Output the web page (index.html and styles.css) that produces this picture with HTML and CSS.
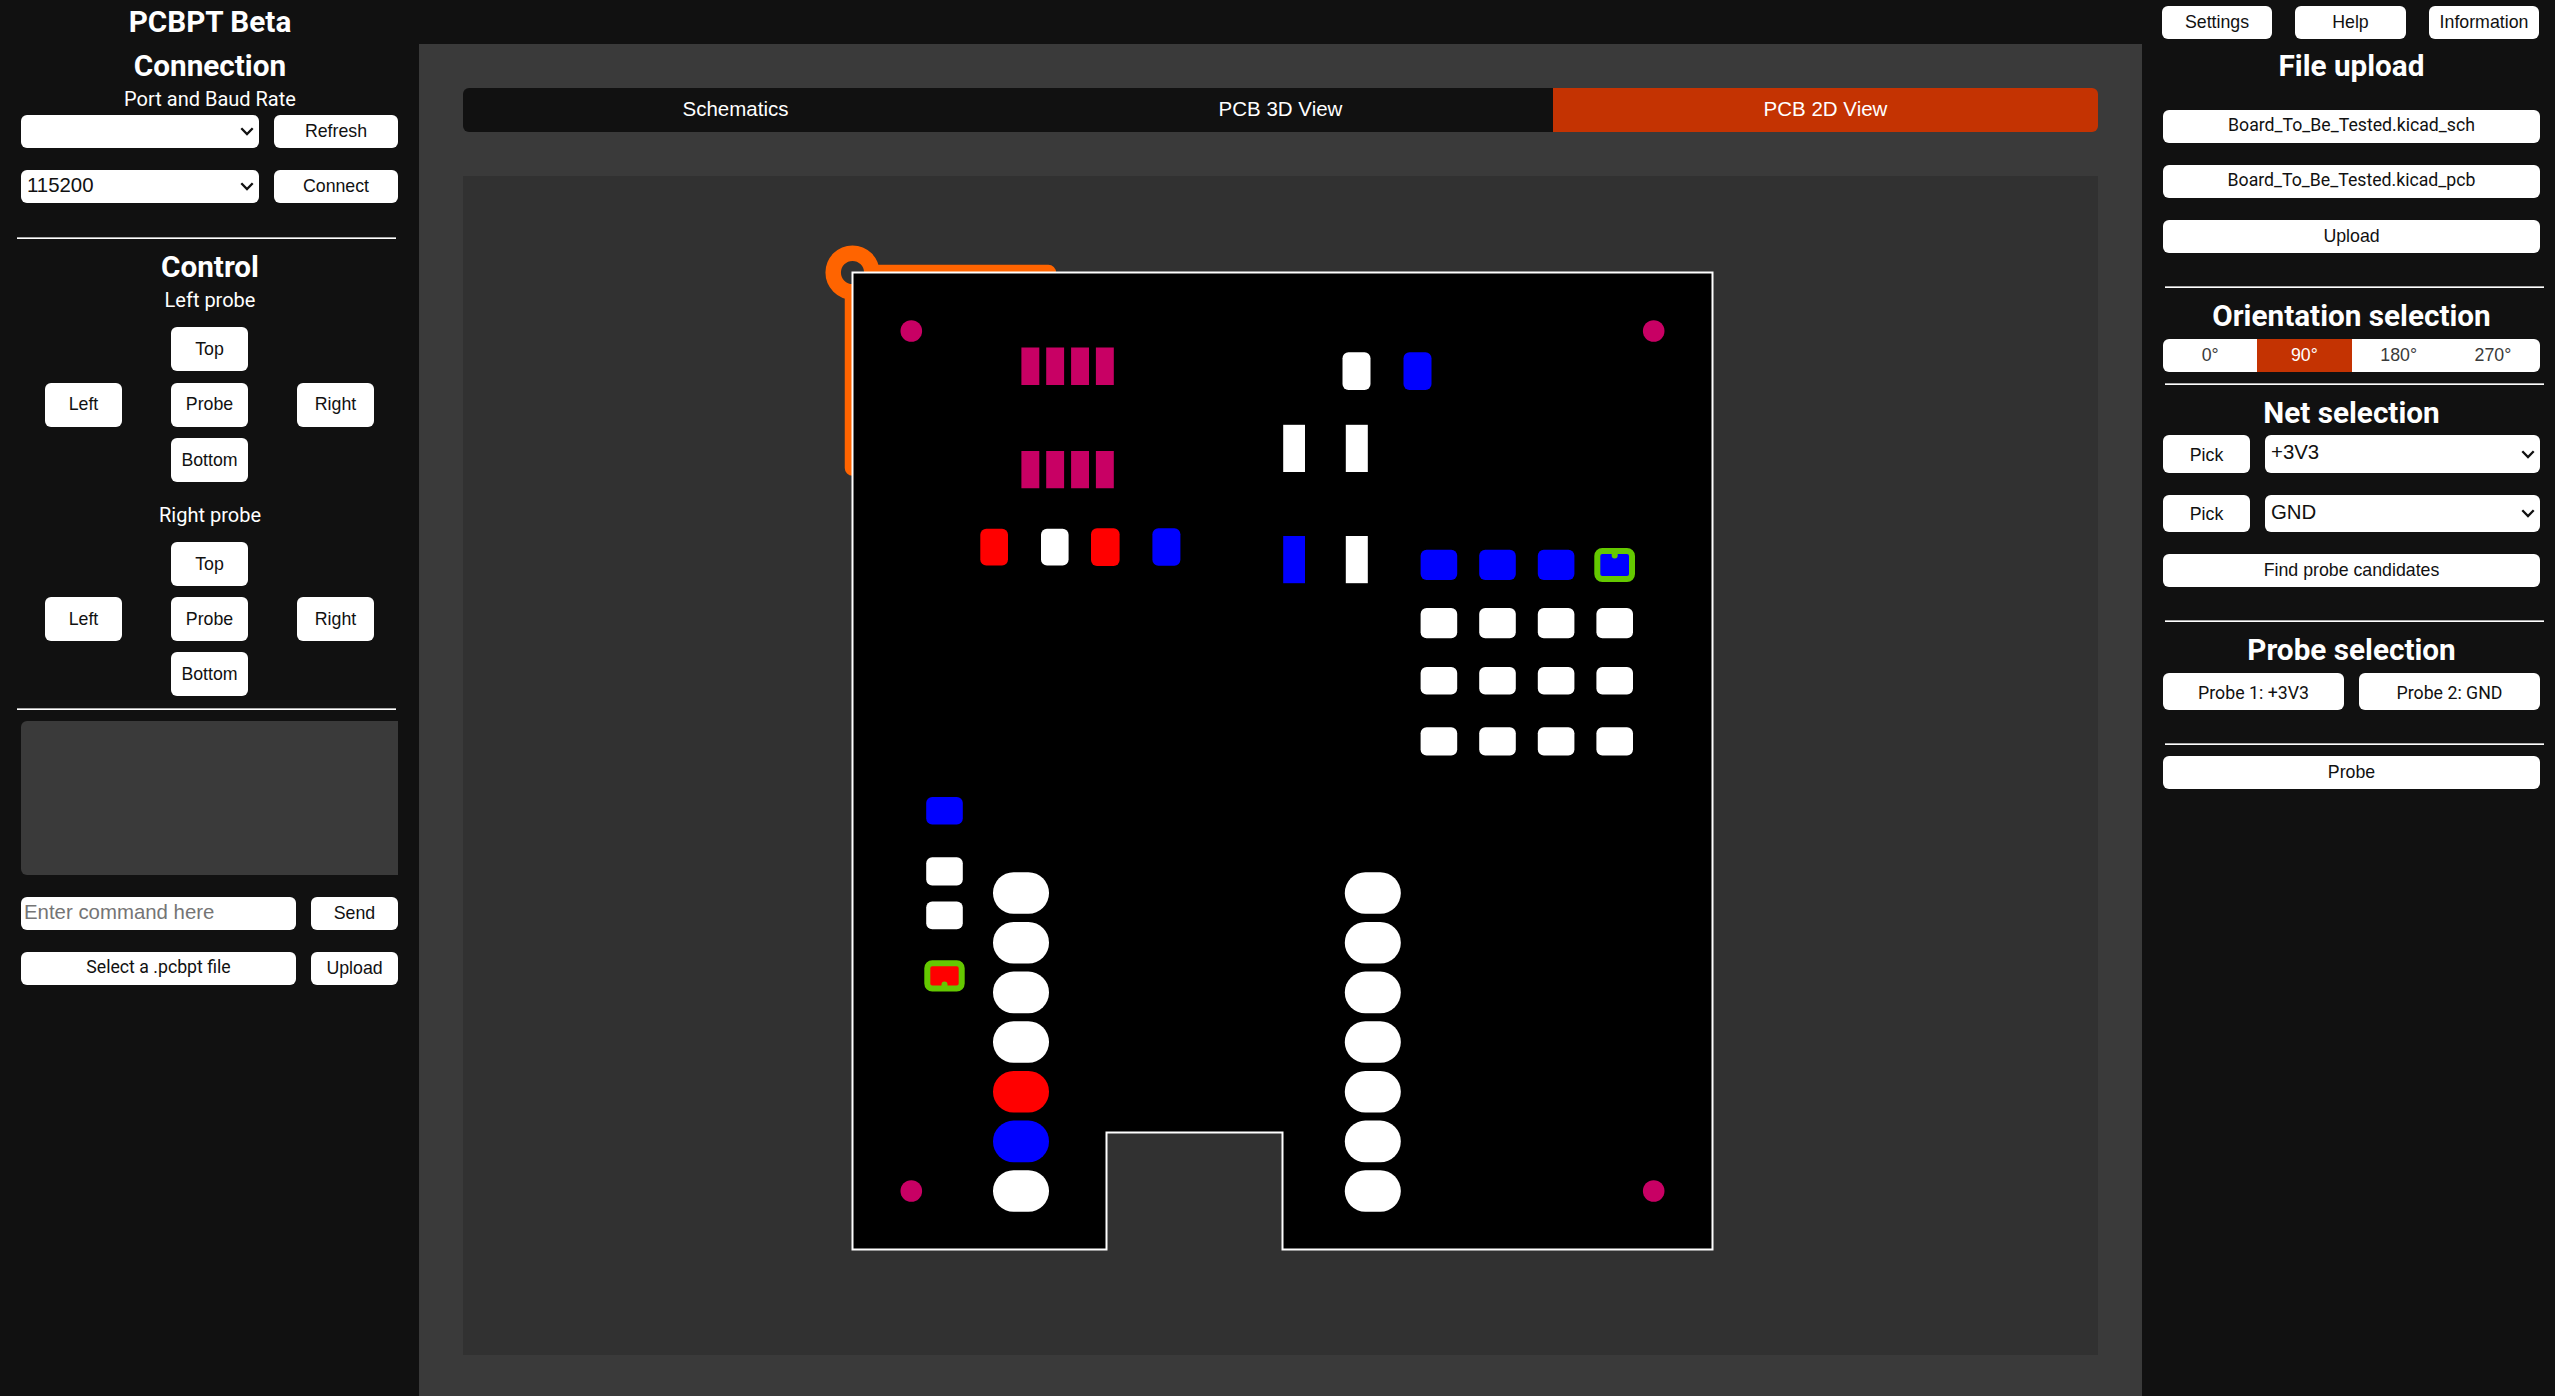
FILE: index.html
```html
<!DOCTYPE html>
<html lang="en">
<head>
<meta charset="utf-8">
<title>PCBPT Beta</title>
<link rel="stylesheet" href="styles.css">
</head>
<body>
<div class="app">
  <aside class="side side-left">
    <h1 class="heading">PCBPT Beta</h1>
    <h2 class="heading">Connection</h2>
    <p class="caption">Port and Baud Rate</p>
    <div class="stack stack-connection">
      <div class="row row-port">
        <div class="select"><span class="select-value"></span><svg class="chevron" viewBox="0 0 14 9"><path d="M1.3 1.3 7 7 12.7 1.3"/></svg></div>
        <button class="btn">Refresh</button>
      </div>
      <div class="row row-port">
        <div class="select"><span class="select-value">115200</span><svg class="chevron" viewBox="0 0 14 9"><path d="M1.3 1.3 7 7 12.7 1.3"/></svg></div>
        <button class="btn">Connect</button>
      </div>
    </div>
    <hr class="rule rule-connection">
    <h2 class="heading">Control</h2>
    <p class="caption">Left probe</p>
    <div class="pad-grid">
      <button class="btn pad-top">Top</button>
      <button class="btn pad-left">Left</button>
      <button class="btn">Probe</button>
      <button class="btn">Right</button>
      <button class="btn pad-bottom">Bottom</button>
    </div>
    <p class="caption caption-right">Right probe</p>
    <div class="pad-grid pad-grid-right">
      <button class="btn pad-top">Top</button>
      <button class="btn pad-left">Left</button>
      <button class="btn">Probe</button>
      <button class="btn">Right</button>
      <button class="btn pad-bottom">Bottom</button>
    </div>
    <hr class="rule rule-control">
    <div class="stack">
      <div class="console"></div>
      <div class="row row-command">
        <input class="command" type="text" placeholder="Enter command here">
        <button class="btn">Send</button>
      </div>
      <div class="row row-command">
        <label class="btn file-label">Select a .pcbpt file</label>
        <button class="btn">Upload</button>
      </div>
    </div>
  </aside>

  <main class="main">
    <nav class="tabs">
      <button class="tab">Schematics</button>
      <button class="tab">PCB 3D View</button>
      <button class="tab tab-active">PCB 2D View</button>
    </nav>
    <section class="viewer">
      <svg class="board" viewBox="463 176 1635 1179">
        <g class="origin">
          <circle cx="852.5" cy="272.5" r="19.3"/>
          <path d="M873 272.5H1048.3M852.5 293V468"/>
        </g>
        <path class="outline" d="M852.5 272.5H1712.5V1249.5H1282.5V1132.5H1106.5V1249.5H852.5Z"/>
        <g class="unused">
          <circle cx="911.3" cy="331" r="10.8"/>
          <circle cx="1653.7" cy="331" r="10.8"/>
          <circle cx="911.3" cy="1191" r="10.8"/>
          <circle cx="1653.7" cy="1191" r="10.8"/>
          <path d="M1021.4 347.5h17.9v37.5h-17.9zM1046.2 347.5h17.9v37.5h-17.9zM1071.1 347.5h17.9v37.5h-17.9zM1095.9 347.5h17.9v37.5h-17.9z"/>
          <path d="M1021.4 451h17.9v37.3h-17.9zM1046.2 451h17.9v37.3h-17.9zM1071.1 451h17.9v37.3h-17.9zM1095.9 451h17.9v37.3h-17.9z"/>
        </g>
        <g class="pads">
          <rect x="1041" y="528.8" width="27.6" height="36.6" rx="6"/>
          <rect x="1342.5" y="352.2" width="28" height="37.8" rx="6"/>
          <rect x="1283.2" y="424.8" width="21.8" height="47.2"/>
          <rect x="1345.8" y="424.8" width="22" height="47.2"/>
          <rect x="1345.8" y="536" width="22" height="47.2"/>
          <rect x="1420.6" y="608" width="36.6" height="30.2" rx="6"/>
          <rect x="1479.2" y="608" width="36.6" height="30.2" rx="6"/>
          <rect x="1537.8" y="608" width="36.6" height="30.2" rx="6"/>
          <rect x="1596.4" y="608" width="36.6" height="30.2" rx="6"/>
          <rect x="1420.6" y="667" width="36.6" height="27.6" rx="6"/>
          <rect x="1479.2" y="667" width="36.6" height="27.6" rx="6"/>
          <rect x="1537.8" y="667" width="36.6" height="27.6" rx="6"/>
          <rect x="1596.4" y="667" width="36.6" height="27.6" rx="6"/>
          <rect x="1420.6" y="727.2" width="36.6" height="28.2" rx="6"/>
          <rect x="1479.2" y="727.2" width="36.6" height="28.2" rx="6"/>
          <rect x="1537.8" y="727.2" width="36.6" height="28.2" rx="6"/>
          <rect x="1596.4" y="727.2" width="36.6" height="28.2" rx="6"/>
          <rect x="926.2" y="857.2" width="36.6" height="28.4" rx="6"/>
          <rect x="926.2" y="901.4" width="36.6" height="27.8" rx="6"/>
          <rect x="993" y="872.2" width="56" height="41.6" rx="20.6"/>
          <rect x="993" y="921.9" width="56" height="41.6" rx="20.6"/>
          <rect x="993" y="971.6" width="56" height="41.6" rx="20.6"/>
          <rect x="993" y="1021.2" width="56" height="41.6" rx="20.6"/>
          <rect x="993" y="1170.2" width="56" height="41.6" rx="20.6"/>
          <rect x="1344.8" y="872.2" width="56" height="41.6" rx="20.6"/>
          <rect x="1344.8" y="921.9" width="56" height="41.6" rx="20.6"/>
          <rect x="1344.8" y="971.6" width="56" height="41.6" rx="20.6"/>
          <rect x="1344.8" y="1021.2" width="56" height="41.6" rx="20.6"/>
          <rect x="1344.8" y="1070.9" width="56" height="41.6" rx="20.6"/>
          <rect x="1344.8" y="1120.6" width="56" height="41.6" rx="20.6"/>
          <rect x="1344.8" y="1170.2" width="56" height="41.6" rx="20.6"/>
        </g>
        <g class="net-one">
          <rect x="980.3" y="528.8" width="27.7" height="36.6" rx="6"/>
          <rect x="1091" y="528.2" width="28.6" height="37.8" rx="6"/>
          <rect x="926.2" y="962" width="36.6" height="28" rx="6"/>
          <rect x="993" y="1070.9" width="56" height="41.6" rx="20.6"/>
        </g>
        <g class="net-two">
          <rect x="1152.4" y="528.2" width="28" height="37.6" rx="6"/>
          <rect x="1403.5" y="352.2" width="28" height="37.8" rx="6"/>
          <rect x="1283.2" y="536" width="21.8" height="47.2"/>
          <rect x="1420.6" y="549.7" width="36.6" height="30.2" rx="6"/>
          <rect x="1479.2" y="549.7" width="36.6" height="30.2" rx="6"/>
          <rect x="1537.8" y="549.7" width="36.6" height="30.2" rx="6"/>
          <rect x="1596.4" y="549.7" width="36.6" height="30.2" rx="6"/>
          <rect x="926.2" y="796.9" width="36.6" height="27.6" rx="6"/>
          <rect x="993" y="1120.6" width="56" height="41.6" rx="20.6"/>
        </g>
        <g class="picked">
          <rect x="1597.3" y="550.9" width="34.7" height="28.2" rx="5"/>
          <path d="M1614.7 551v4.6"/>
          <rect x="927.3" y="963.2" width="34.4" height="25.4" rx="5"/>
          <path d="M944.5 988v-3.6"/>
        </g>
      </svg>
    </section>
  </main>

  <aside class="side side-right">
    <div class="toolbar">
      <button class="btn">Settings</button>
      <button class="btn">Help</button>
      <button class="btn">Information</button>
    </div>
    <h2 class="heading">File upload</h2>
    <div class="stack stack-files">
      <label class="btn file-label">Board_To_Be_Tested.kicad_sch</label>
      <label class="btn file-label">Board_To_Be_Tested.kicad_pcb</label>
      <button class="btn">Upload</button>
    </div>
    <hr class="rule rule-files">
    <h2 class="heading">Orientation selection</h2>
    <div class="segments">
      <button class="segment">0°</button>
      <button class="segment segment-active">90°</button>
      <button class="segment">180°</button>
      <button class="segment">270°</button>
    </div>
    <hr class="rule rule-orientation">
    <h2 class="heading">Net selection</h2>
    <div class="stack stack-nets">
      <div class="row row-net row-net-first">
        <button class="btn">Pick</button>
        <div class="select"><span class="select-value">+3V3</span><svg class="chevron" viewBox="0 0 14 9"><path d="M1.3 1.3 7 7 12.7 1.3"/></svg></div>
      </div>
      <div class="row row-net">
        <button class="btn">Pick</button>
        <div class="select"><span class="select-value">GND</span><svg class="chevron" viewBox="0 0 14 9"><path d="M1.3 1.3 7 7 12.7 1.3"/></svg></div>
      </div>
      <button class="btn">Find probe candidates</button>
    </div>
    <hr class="rule rule-nets">
    <h2 class="heading">Probe selection</h2>
    <div class="row row-probes">
      <label class="btn probe-label">Probe 1: +3V3</label>
      <label class="btn probe-label">Probe 2: GND</label>
    </div>
    <hr class="rule rule-probes">
    <button class="btn btn-probe">Probe</button>
  </aside>
</div>
</body>
</html>
```
FILE: styles.css
```css
* {
  box-sizing: border-box;
}

body {
  margin: 0;
  background: #111;
  color: #fff;
  font-family: Roboto, "Liberation Sans", sans-serif;
  overflow: hidden;
}

.app {
  display: grid;
  grid-template-columns: 419px 1723px 413px;
  height: 1396px;
}

.side {
  display: flex;
  flex-direction: column;
  background: #111;
}

.side-left {
  padding: 0 21px;
}

.side-right {
  padding: 0 15px 0 21px;
}

.heading {
  margin: 0;
  height: 44px;
  line-height: 44px;
  font-size: 29.7px;
  font-weight: 700;
  text-align: center;
}

.side-left .heading,
.side-left .caption {
  padding-left: 1px;
}

.caption {
  margin: 0;
  height: 22px;
  line-height: 22px;
  font-size: 20px;
  text-align: center;
}

.stack {
  display: flex;
  flex-direction: column;
  gap: 22px;
}

.stack-connection {
  margin-top: 5px;
}

.stack-files {
  margin-top: 22px;
}

.row {
  display: grid;
  gap: 15px;
  height: 33px;
}

.row-port {
  grid-template-columns: 238px 124px;
}

.row-command {
  grid-template-columns: 275px 87px;
}

.row-net {
  grid-template-columns: 87px 275px;
  height: 37px;
}

.row-net-first {
  height: 38px;
}

.row-probes {
  grid-template-columns: 1fr 1fr;
  height: 37px;
  margin-top: 1px;
}

.btn {
  display: flex;
  align-items: center;
  justify-content: center;
  height: 33px;
  margin: 0;
  padding: 0;
  border: 0;
  border-radius: 6px;
  background: #fff;
  color: #111;
  font: 17.75px "Liberation Sans", Arial, sans-serif;
  white-space: nowrap;
}

.row .btn {
  height: 100%;
}

.btn.file-label {
  padding-bottom: 3px;
  font-family: Roboto, sans-serif;
  font-size: 17.7px;
}

.btn.probe-label {
  padding-top: 2px;
  font-family: Roboto, sans-serif;
}

.row-net .btn {
  padding-top: 2px;
}

.select {
  display: flex;
  align-items: center;
  justify-content: space-between;
  padding: 0 5px 0 6px;
  border-radius: 6px;
  background: #fff;
  color: #111;
  font: 20.4px "Liberation Sans", Arial, sans-serif;
}

.select-value {
  padding-bottom: 2px;
}

.row-net .select-value {
  padding-bottom: 3px;
}

.chevron {
  width: 14px;
  height: 9px;
  fill: none;
  stroke: #111;
  stroke-width: 2.3;
}

.rule {
  width: 379px;
  height: 2px;
  border: 0;
  border-top: 1px solid #aaa;
  border-bottom: 1px solid #fff;
  flex: none;
}

.side-left .rule {
  margin-left: -4px;
}

.side-right .rule {
  margin-left: 2px;
}

.side .rule-connection {
  margin-top: 34px;
  margin-bottom: 6px;
}

.side .rule-control {
  margin-top: 12px;
  margin-bottom: 11px;
}

.side .rule-files {
  margin-top: 33px;
  margin-bottom: 6px;
}

.side .rule-orientation {
  margin-top: 11px;
  margin-bottom: 6px;
}

.side .rule-nets {
  margin-top: 33px;
  margin-bottom: 6px;
}

.side .rule-probes {
  margin-top: 33px;
  margin-bottom: 11px;
}

.pad-grid {
  display: grid;
  grid-template-columns: repeat(3, 77px);
  grid-auto-rows: 44px;
  column-gap: 49px;
  row-gap: 11.5px;
  margin: 16px 24px 0;
}

.pad-grid-right {
  row-gap: 11px;
}

.pad-grid .btn {
  height: 44px;
}

.pad-top,
.pad-bottom {
  grid-column: 2;
}

.pad-left {
  grid-column: 1;
}

.caption-right {
  margin-top: 22px;
}

.console {
  height: 154px;
  border-radius: 6px 0 0 6px;
  background: #3a3a3a;
}

.command {
  width: 100%;
  height: 33px;
  padding: 0 3px 3px;
  border: 0;
  border-radius: 6px;
  background: #fff;
  font: 20.4px "Liberation Sans", Arial, sans-serif;
}

.command::placeholder {
  color: #757575;
}

.main {
  display: flex;
  flex-direction: column;
  gap: 44px;
  margin-top: 44px;
  padding: 44px 44px 41px;
  background: #3a3a3a;
}

.tabs {
  display: grid;
  grid-template-columns: repeat(3, 1fr);
  height: 44px;
  border-radius: 6px;
  overflow: hidden;
  flex: none;
}

.tab {
  padding: 0 0 2px;
  border: 0;
  background: #111;
  color: #fff;
  font: 20.5px "Liberation Sans", Arial, sans-serif;
}

.tab-active {
  background: #c43302;
}

.viewer {
  height: 1179px;
  background: #313131;
}

.board {
  display: block;
  width: 1635px;
  height: 1179px;
}

.origin {
  fill: none;
  stroke: #ff6400;
  stroke-width: 15.5;
  stroke-linecap: round;
}

.outline {
  fill: #000;
  stroke: #fff;
  stroke-width: 2;
}

.unused {
  fill: #c80064;
}

.pads {
  fill: #fff;
}

.net-one {
  fill: #f00;
}

.net-two {
  fill: #00f;
}

.picked {
  fill: none;
  stroke: #64c800;
  stroke-width: 6;
  stroke-linecap: round;
}

.toolbar {
  display: grid;
  grid-template-columns: 110px 111px 110px;
  gap: 23px;
  height: 44px;
  margin-left: -1px;
  padding-top: 6px;
}

.segments {
  display: grid;
  grid-template-columns: repeat(4, 1fr);
  height: 33px;
  margin-top: 1px;
  border-radius: 6px;
  overflow: hidden;
}

.segment {
  padding: 0;
  border: 0;
  background: #fff;
  color: #3a3a3a;
  font: 17.75px "Liberation Sans", Arial, sans-serif;
}

.segment-active {
  background: #c43302;
  color: #fff;
}
```
